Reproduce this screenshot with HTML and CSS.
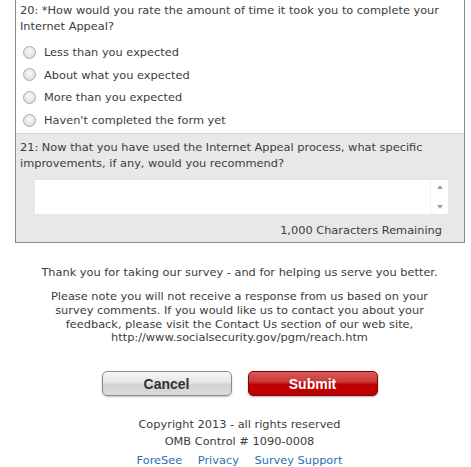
FILE: index.html
```html
<!DOCTYPE html>
<html lang="en">
<head>
    <meta charset="UTF-8">
    <title>Survey</title>
    <link rel="stylesheet" href="styles.css">
</head>
<body>
    <div class="panel">
        <div class="question">
            <p class="qtext">20: *How would you rate the amount of time it took you to complete your Internet Appeal?</p>
            <ul class="choices">
                <li><input type="radio" name="q20" id="a1"><label for="a1">Less than you expected</label></li>
                <li><input type="radio" name="q20" id="a2"><label for="a2">About what you expected</label></li>
                <li><input type="radio" name="q20" id="a3"><label for="a3">More than you expected</label></li>
                <li><input type="radio" name="q20" id="a4"><label for="a4">Haven't completed the form yet</label></li>
            </ul>
        </div>
        <div class="question alt">
            <p class="qtext">21: Now that you have used the Internet Appeal process, what specific improvements, if any, would you recommend?</p>
            <div class="textbox">
                <textarea></textarea>
                <div class="scroll">
                    <span class="arrow up"></span>
                    <span class="arrow down"></span>
                </div>
            </div>
            <p class="remaining">1,000 Characters Remaining</p>
        </div>
    </div>

    <div class="footer">
        <p class="thanks">Thank you for taking our survey - and for helping us serve you better.</p>
        <p class="note">Please note you will not receive a response from us based on your survey comments. If you would like us to contact you about your feedback, please visit the Contact Us section of our web site, http://www.socialsecurity.gov/pgm/reach.htm</p>
        <div class="buttons">
            <button class="btn cancel">Cancel</button>
            <button class="btn submit">Submit</button>
        </div>
        <p class="copy">Copyright 2013 - all rights reserved</p>
        <p class="copy">OMB Control # 1090-0008</p>
        <p class="links">
            <a href="#">ForeSee</a>
            <a href="#">Privacy</a>
            <a href="#">Survey Support</a>
        </p>
    </div>
</body>
</html>
```

FILE: styles.css
```css
body {
    margin: 0;
    width: 471px;
    font-family: "DejaVu Sans", Verdana, sans-serif;
    font-size: 11.35px;
    color: #3c3c3c;
    background: #fff;
}

p {
    margin: 0;
}

.panel {
    margin-left: 15px;
    width: 448px;
    border: 1px solid #8a8a8a;
    border-top: none;
}

.question {
    padding: 2px 4px 2px 4px;
}

.question.alt {
    background-color: #e8e8e8;
    border-top: 1px solid #d6d6d6;
    padding: 5px 4px 4px 4px;
}

.qtext {
    line-height: 16px;
}

.choices {
    list-style: none;
    margin: 7px 0 0 0;
    padding: 0 0 0 3px;
}

.choices li {
    display: flex;
    align-items: center;
    height: 22.6px;
}

.choices input {
    appearance: none;
    -webkit-appearance: none;
    width: 13px;
    height: 13px;
    margin: 0 8px 0 0;
    border: 1px solid #a9a9a9;
    border-radius: 50%;
    background: radial-gradient(circle at 50% 40%, #fafafa 0%, #e6e6e6 55%, #cfcfcf 100%);
}

.textbox {
    display: flex;
    margin: 8px 12px 0 15px;
    height: 34px;
    background: #fff;
    border-top: 1px solid #e2e2e2;
}

.textbox textarea {
    flex: 1;
    border: none;
    resize: none;
    outline: none;
    padding: 2px;
    font-family: inherit;
}

.scroll {
    width: 17px;
    display: flex;
    flex-direction: column;
    justify-content: space-between;
    align-items: center;
    padding: 5px 0;
    border-left: 1px solid #f0f0f0;
}

.arrow {
    width: 0;
    height: 0;
    border-left: 3px solid transparent;
    border-right: 3px solid transparent;
}

.arrow.up {
    border-bottom: 4px solid #a0a0a0;
}

.arrow.down {
    border-top: 4px solid #a0a0a0;
}

.remaining {
    text-align: right;
    padding: 8px 18px 0 0;
    line-height: 16px;
}

.footer {
    text-align: center;
    padding: 22px 0 0 8px;
}

.thanks {
    line-height: 14px;
}

.note {
    margin: 11px auto 0 auto;
    width: 390px;
    line-height: 13.7px;
}

.buttons {
    display: flex;
    justify-content: center;
    gap: 16px;
    margin-top: 26px;
}

.btn {
    width: 130px;
    height: 25px;
    border-radius: 5px;
    font-family: "Liberation Sans", Arial, sans-serif;
    font-size: 14px;
    font-weight: bold;
    padding: 0;
}

.cancel {
    color: #333;
    border: 1px solid #8c8c8c;
    background: linear-gradient(#f6f6f6 0%, #e6e6e6 45%, #d2d2d2 55%, #dadada 100%);
    box-shadow: 0 1px 2px rgba(0, 0, 0, 0.25);
}

.submit {
    color: #fff;
    border: 1px solid #8e0000;
    background: linear-gradient(#d85a5a 0%, #cc3c3c 40%, #bb0000 55%, #c00000 100%);
    box-shadow: 0 1px 2px rgba(0, 0, 0, 0.3);
}

.copy {
    line-height: 17px;
}

.buttons + .copy {
    margin-top: 20px;
}

.links {
    line-height: 18px;
    margin-top: 1px;
}

.links a {
    color: #2a70b8;
    text-decoration: none;
    margin: 0 6px;
}
```
